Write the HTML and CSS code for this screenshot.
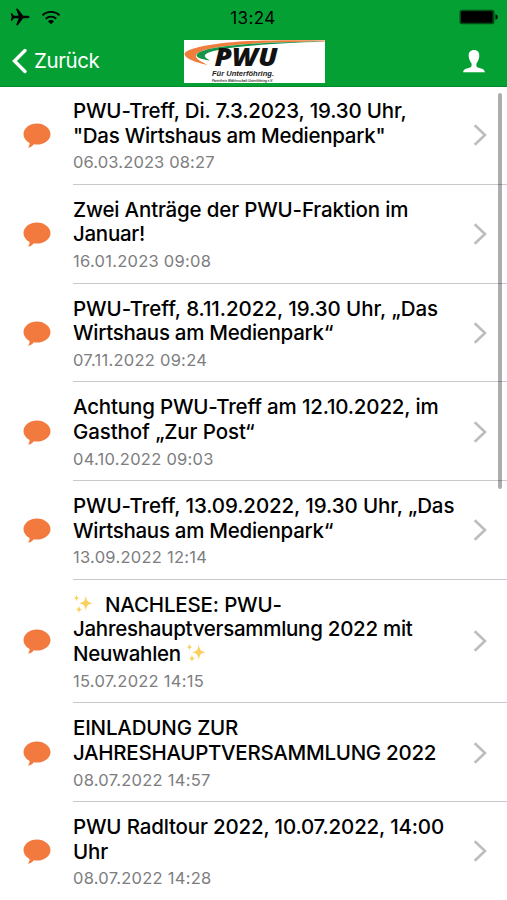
FILE: index.html
```html
<!DOCTYPE html>
<html lang="de">
<head>
<meta charset="utf-8">
<title>PWU</title>
<link rel="stylesheet" href="styles.css">
</head>
<body>
<svg width="0" height="0" class="defs">
  <symbol id="bubble" viewBox="0 0 28 26"><path d="M14 .5C6.600.5.5 5.200.5 11.200c0 3.400 2.200 6.700 6 8.700.3 1.500-.5 3-1.400 4.900 2.600-.6 4.500-1.900 5.700-3.500 1 .2 2.100.3 3.200.3 7.400 0 13.500-4.700 13.500-10.400S21.400.5 14 .5z" fill="#f27a3f"/></symbol>
  <symbol id="chevron" viewBox="0 0 14 24"><path d="M1.700 2.200 12 12 1.700 21.800" fill="none" stroke="#bdbdbf" stroke-width="2.600"/></symbol>
  <symbol id="sparkles" viewBox="0 0 20 20"><g fill="#fbd060"><path d="M12.800 1.500c.9 5.400 1.700 6.500 6.700 7.700-5 1.200-5.800 2.300-6.700 7.700-.9-5.400-1.700-6.500-6.700-7.700 5-1.200 5.800-2.300 6.700-7.700z"/><path d="M3.500.5c.4 2.600.8 3.100 3 3.600-2.200.5-2.600 1-3 3.600-.4-2.600-.8-3.100-3-3.600 2.200-.5 2.600-1 3-3.600zM6 11.500c.5 2.800.9 3.300 3.300 3.900-2.400.6-2.800 1.100-3.300 3.900-.5-2.800-.9-3.300-3.300-3.900 2.400-.6 2.800-1.100 3.300-3.900z"/></g></symbol>
</svg>
<header class="top">
  <div class="status">
    <div class="signals">
      <svg width="20" height="18" viewBox="0 0 20 18"><path d="M19.500 9c0-.8-1-1.200-2-1.200h-4.300L7.800.7H6l2.700 7.100H4L2 5.300H.8L1.700 9l-.9 3.700H2L4 10.200h4.700L6 17.300h1.800l5.400-7.100h4.300c1 0 2-.4 2-1.200z"/></svg>
      <svg class="wifi" width="20" height="15" viewBox="0 0 20 15"><g fill="none" stroke="#000" stroke-width="1.900"><path d="M1.500 5.300a12.200 12.200 0 0 1 17 0M4.800 8.700a7.500 7.500 0 0 1 10.400 0"/></g><path d="M10 14.200 7 11.300a4.200 4.200 0 0 1 6 0z"/></svg>
    </div>
    <div class="clock">13:24</div>
    <svg class="battery" width="40" height="16" viewBox="0 0 40 16"><rect x=".5" y=".8" width="35" height="14.400" rx="2.500" fill="#004c16"/><rect x="2" y="2.200" width="31.500" height="11.600" rx="1"/><path d="M36.500 5.200c1.600.4 2.200 1.500 2.200 2.800s-.6 2.400-2.200 2.800z"/></svg>
  </div>
  <nav class="nav">
    <a class="back"><svg width="16" height="26" viewBox="0 0 16 26"><path d="M13 2.500 2.500 13 13 23.500" fill="none" stroke="#fff" stroke-width="3.400" stroke-linecap="round"/></svg><span>Zurück</span></a>
    <svg class="logo" width="141" height="43" viewBox="0 0 141 43">
      <rect width="141" height="43" fill="#fff"/>
      <path d="M141 .6C95-.4 45 0 15 7 5 9.500 0 12 .5 14.500c1 4 11 8 23 10.500-8-4-12.500-7-11.500-10C14 9.500 42 2 141 1.600z" fill="#ef7d3e"/>
      <path d="M141 1.500C84 1.800 45 4.500 26 8.800 15 11.500 11 14 13 16.500c2 2.200 7 3 13 4-4-2.500-6.500-4-4.500-6C27 9 66 4 141 1.500z" fill="#169447"/>
      <text x="30.500" y="26.300" class="logo-name" textLength="63" lengthAdjust="spacingAndGlyphs">PWU</text>
      <text x="28" y="36" class="logo-place" textLength="62" lengthAdjust="spacingAndGlyphs">Für Unterföhring.</text>
      <text x="28" y="41.800" class="logo-sub" textLength="61" lengthAdjust="spacingAndGlyphs">Parteifreie Wählerschaft Unterföhring e.V.</text>
    </svg>
    <svg class="person" width="24" height="24" viewBox="0 0 24 24"><path d="M12 1c-3.600 0-5.600 2.500-5.300 6 .2 3 1.400 5.500 2.600 7 .6 1 .4 3.200-.3 4-1.500 1.400-7.500 1-8 5.300h22c-.5-4.300-6.500-3.900-8-5.300-.7-.8-.9-3-.3-4 1.200-1.500 2.400-4 2.600-7 .3-3.500-1.700-6-5.300-6z" fill="#fff"/></svg>
  </nav>
</header>
<main class="list">
  <article class="row"><svg class="bubble"><use href="#bubble"/></svg><div class="body"><h2><span class="snug">PWU-Treff, Di. 7.3.2023, 19.30 Uhr,</span><span class="tight">"Das Wirtshaus am Medienpark"</span></h2><time>06.03.2023 08:27</time></div><svg class="chevron"><use href="#chevron"/></svg></article>
  <article class="row"><svg class="bubble"><use href="#bubble"/></svg><div class="body"><h2><span class="snug">Zwei Anträge der PWU-Fraktion im</span><span class="tight">Januar!</span></h2><time class="wide">16.01.2023 09:08</time></div><svg class="chevron"><use href="#chevron"/></svg></article>
  <article class="row"><svg class="bubble"><use href="#bubble"/></svg><div class="body"><h2><span class="loose">PWU-Treff, 8.11.2022, 19.30 Uhr, „Das</span><span class="tight">Wirtshaus am Medienpark“</span></h2><time class="wide">07.11.2022 09:24</time></div><svg class="chevron"><use href="#chevron"/></svg></article>
  <article class="row"><svg class="bubble"><use href="#bubble"/></svg><div class="body"><h2><span class="snug">Achtung PWU-Treff am 12.10.2022, im</span><span>Gasthof „Zur Post“</span></h2><time class="wide">04.10.2022 09:03</time></div><svg class="chevron"><use href="#chevron"/></svg></article>
  <article class="row"><svg class="bubble"><use href="#bubble"/></svg><div class="body"><h2><span>PWU-Treff, 13.09.2022, 19.30 Uhr, „Das</span><span class="tight">Wirtshaus am Medienpark“</span></h2><time class="wide">13.09.2022 12:14</time></div><svg class="chevron"><use href="#chevron"/></svg></article>
  <article class="row tall"><svg class="bubble"><use href="#bubble"/></svg><div class="body"><h2><span class="snug"><svg class="sparkles lead"><use href="#sparkles"/></svg>NACHLESE: PWU-</span><span class="tight">Jahreshauptversammlung 2022 mit</span><span class="tight">Neuwahlen <svg class="sparkles"><use href="#sparkles"/></svg></span></h2><time class="wide">15.07.2022 14:15</time></div><svg class="chevron"><use href="#chevron"/></svg></article>
  <article class="row"><svg class="bubble"><use href="#bubble"/></svg><div class="body"><h2><span class="snug">EINLADUNG ZUR</span><span class="tight">JAHRESHAUPTVERSAMMLUNG 2022</span></h2><time class="wide">08.07.2022 14:57</time></div><svg class="chevron"><use href="#chevron"/></svg></article>
  <article class="row"><svg class="bubble"><use href="#bubble"/></svg><div class="body"><h2><span class="snug">PWU Radltour 2022, 10.07.2022, 14:00</span><span>Uhr</span></h2><time class="wide">08.07.2022 14:28</time></div><svg class="chevron"><use href="#chevron"/></svg></article>
</main>
<div class="scrollbar"></div>
</body>
</html>
```
FILE: styles.css
```css
* { box-sizing: border-box; }
body {
  margin: 0;
  width: 507px;
  height: 900px;
  overflow: hidden;
  position: relative;
  background: #fff;
  color: #000;
  font-family: Inter, "Liberation Sans", sans-serif;
}
svg { display: block; flex: none; }
.defs { position: absolute; }
.top { height: 87px; background: #04a034; border-bottom: 1px solid #048a2d; }
.status {
  height: 34px;
  padding: 0 8px 0 10px;
  display: grid;
  grid-template-columns: 1fr auto 1fr;
  align-items: center;
}
.signals { display: flex; align-items: center; gap: 11px; }
.clock { font-size: 17px; letter-spacing: .4px; padding-top: 1px; margin-left: -3px; }
.battery { justify-self: end; }
.nav {
  height: 53px;
  padding: 0 21px 0 12px;
  display: grid;
  grid-template-columns: 172px 141px 1fr;
  align-items: center;
}
.back { display: flex; align-items: center; gap: 6px; color: #fff; font-size: 20.500px; letter-spacing: -.4px; }
.person { justify-self: end; }
.logo { margin-top: 2px; }
.logo-name { font: italic 800 24px "Open Sans", sans-serif; fill: #111; }
.logo-place { font: italic 700 7.500px "Liberation Sans", sans-serif; fill: #222; }
.logo-sub { font: italic 700 3.200px "Liberation Sans", sans-serif; fill: #333; }
.list { margin-top: -1px; }
.row {
  height: 98.750px;
  display: grid;
  grid-template-columns: 50px 1fr 34px;
  padding-left: 23px;
  align-items: center;
  position: relative;
}
.row.tall { height: 123.400px; }
.row::after {
  content: "";
  position: absolute;
  right: 0;
  bottom: 0;
  width: 34px;
  height: 1px;
  background: #c9c9cb;
}
.bubble { width: 28px; height: 26px; margin-top: 2px; }
.body {
  height: 100%;
  padding-top: 13px;
  border-bottom: 1px solid #c9c9cb;
  white-space: nowrap;
}
.chevron { width: 14px; height: 24px; }
h2 { margin: 0; font-size: 20.500px; font-weight: 500; line-height: 24.700px; letter-spacing: -.1px; }
h2 > span { display: block; height: 24.700px; }
.loose { letter-spacing: -.05px; }
.snug { letter-spacing: -.17px; }
.tight { letter-spacing: -.28px; }
time { display: block; margin-top: 4px; font-size: 16.500px; line-height: 20px; color: #7d7d80; letter-spacing: .13px; }
time.wide { letter-spacing: .26px; }
.sparkles { display: inline-block; width: 20px; height: 20px; vertical-align: -2px; }
.sparkles.lead { margin-right: 12px; }
.scrollbar {
  position: absolute;
  right: 5px;
  top: 93px;
  width: 4px;
  height: 396px;
  border-radius: 2px;
  background: rgba(0, 0, 0, .32);
}
```
